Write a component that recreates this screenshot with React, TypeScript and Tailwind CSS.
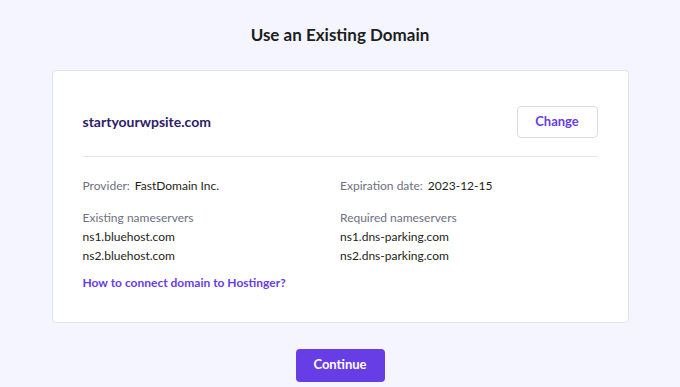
import React from 'react';

const App: React.FC = () => {
  return (
    <div
      className="min-h-[387px] w-full bg-[#f4f5ff] flex flex-col items-center"
      style={{ fontFamily: 'Lato, "Noto Sans", sans-serif' }}
    >
      <h1 className="mt-[22px] text-[17px] font-bold text-[#1d1e20]">
        Use an Existing Domain
      </h1>

      <div className="mt-[22px] w-[577px] bg-white border border-[#e3e3ea] rounded-[4px] px-[30px] pt-[35px] pb-[30px]">
        <div className="flex items-center justify-between pb-[18px] border-b border-[#e3e3ea]">
          <span className="text-[14px] font-bold text-[#2f1c6a]">startyourwpsite.com</span>
          <button className="w-[81px] h-[32px] rounded-[4px] border border-[#dadce0] text-[13px] font-bold text-[#673de6]">
            Change
          </button>
        </div>

        <div className="grid grid-cols-2 pt-[19px] text-[12px] leading-[19px]">
          <div>
            <span className="text-[#6d7081]">Provider:</span>
            <span className="ml-[5px] text-[#1d1e20]">FastDomain Inc.</span>
          </div>
          <div>
            <span className="text-[#6d7081]">Expiration date:</span>
            <span className="ml-[5px] text-[#1d1e20]">2023-12-15</span>
          </div>

          <div className="mt-[13px] flex flex-col">
            <span className="text-[#6d7081]">Existing nameservers</span>
            <span className="text-[#1d1e20]">ns1.bluehost.com</span>
            <span className="text-[#1d1e20]">ns2.bluehost.com</span>
          </div>
          <div className="mt-[13px] flex flex-col">
            <span className="text-[#6d7081]">Required nameservers</span>
            <span className="text-[#1d1e20]">ns1.dns-parking.com</span>
            <span className="text-[#1d1e20]">ns2.dns-parking.com</span>
          </div>
        </div>

        <a className="block mt-[9px] text-[12px] font-bold text-[#673de6]">
          How to connect domain to Hostinger?
        </a>
      </div>

      <button className="mt-[26px] w-[89px] h-[33px] rounded-[4px] bg-[#673de6] text-white text-[13px] font-bold">
        Continue
      </button>
    </div>
  );
};

export default App;
